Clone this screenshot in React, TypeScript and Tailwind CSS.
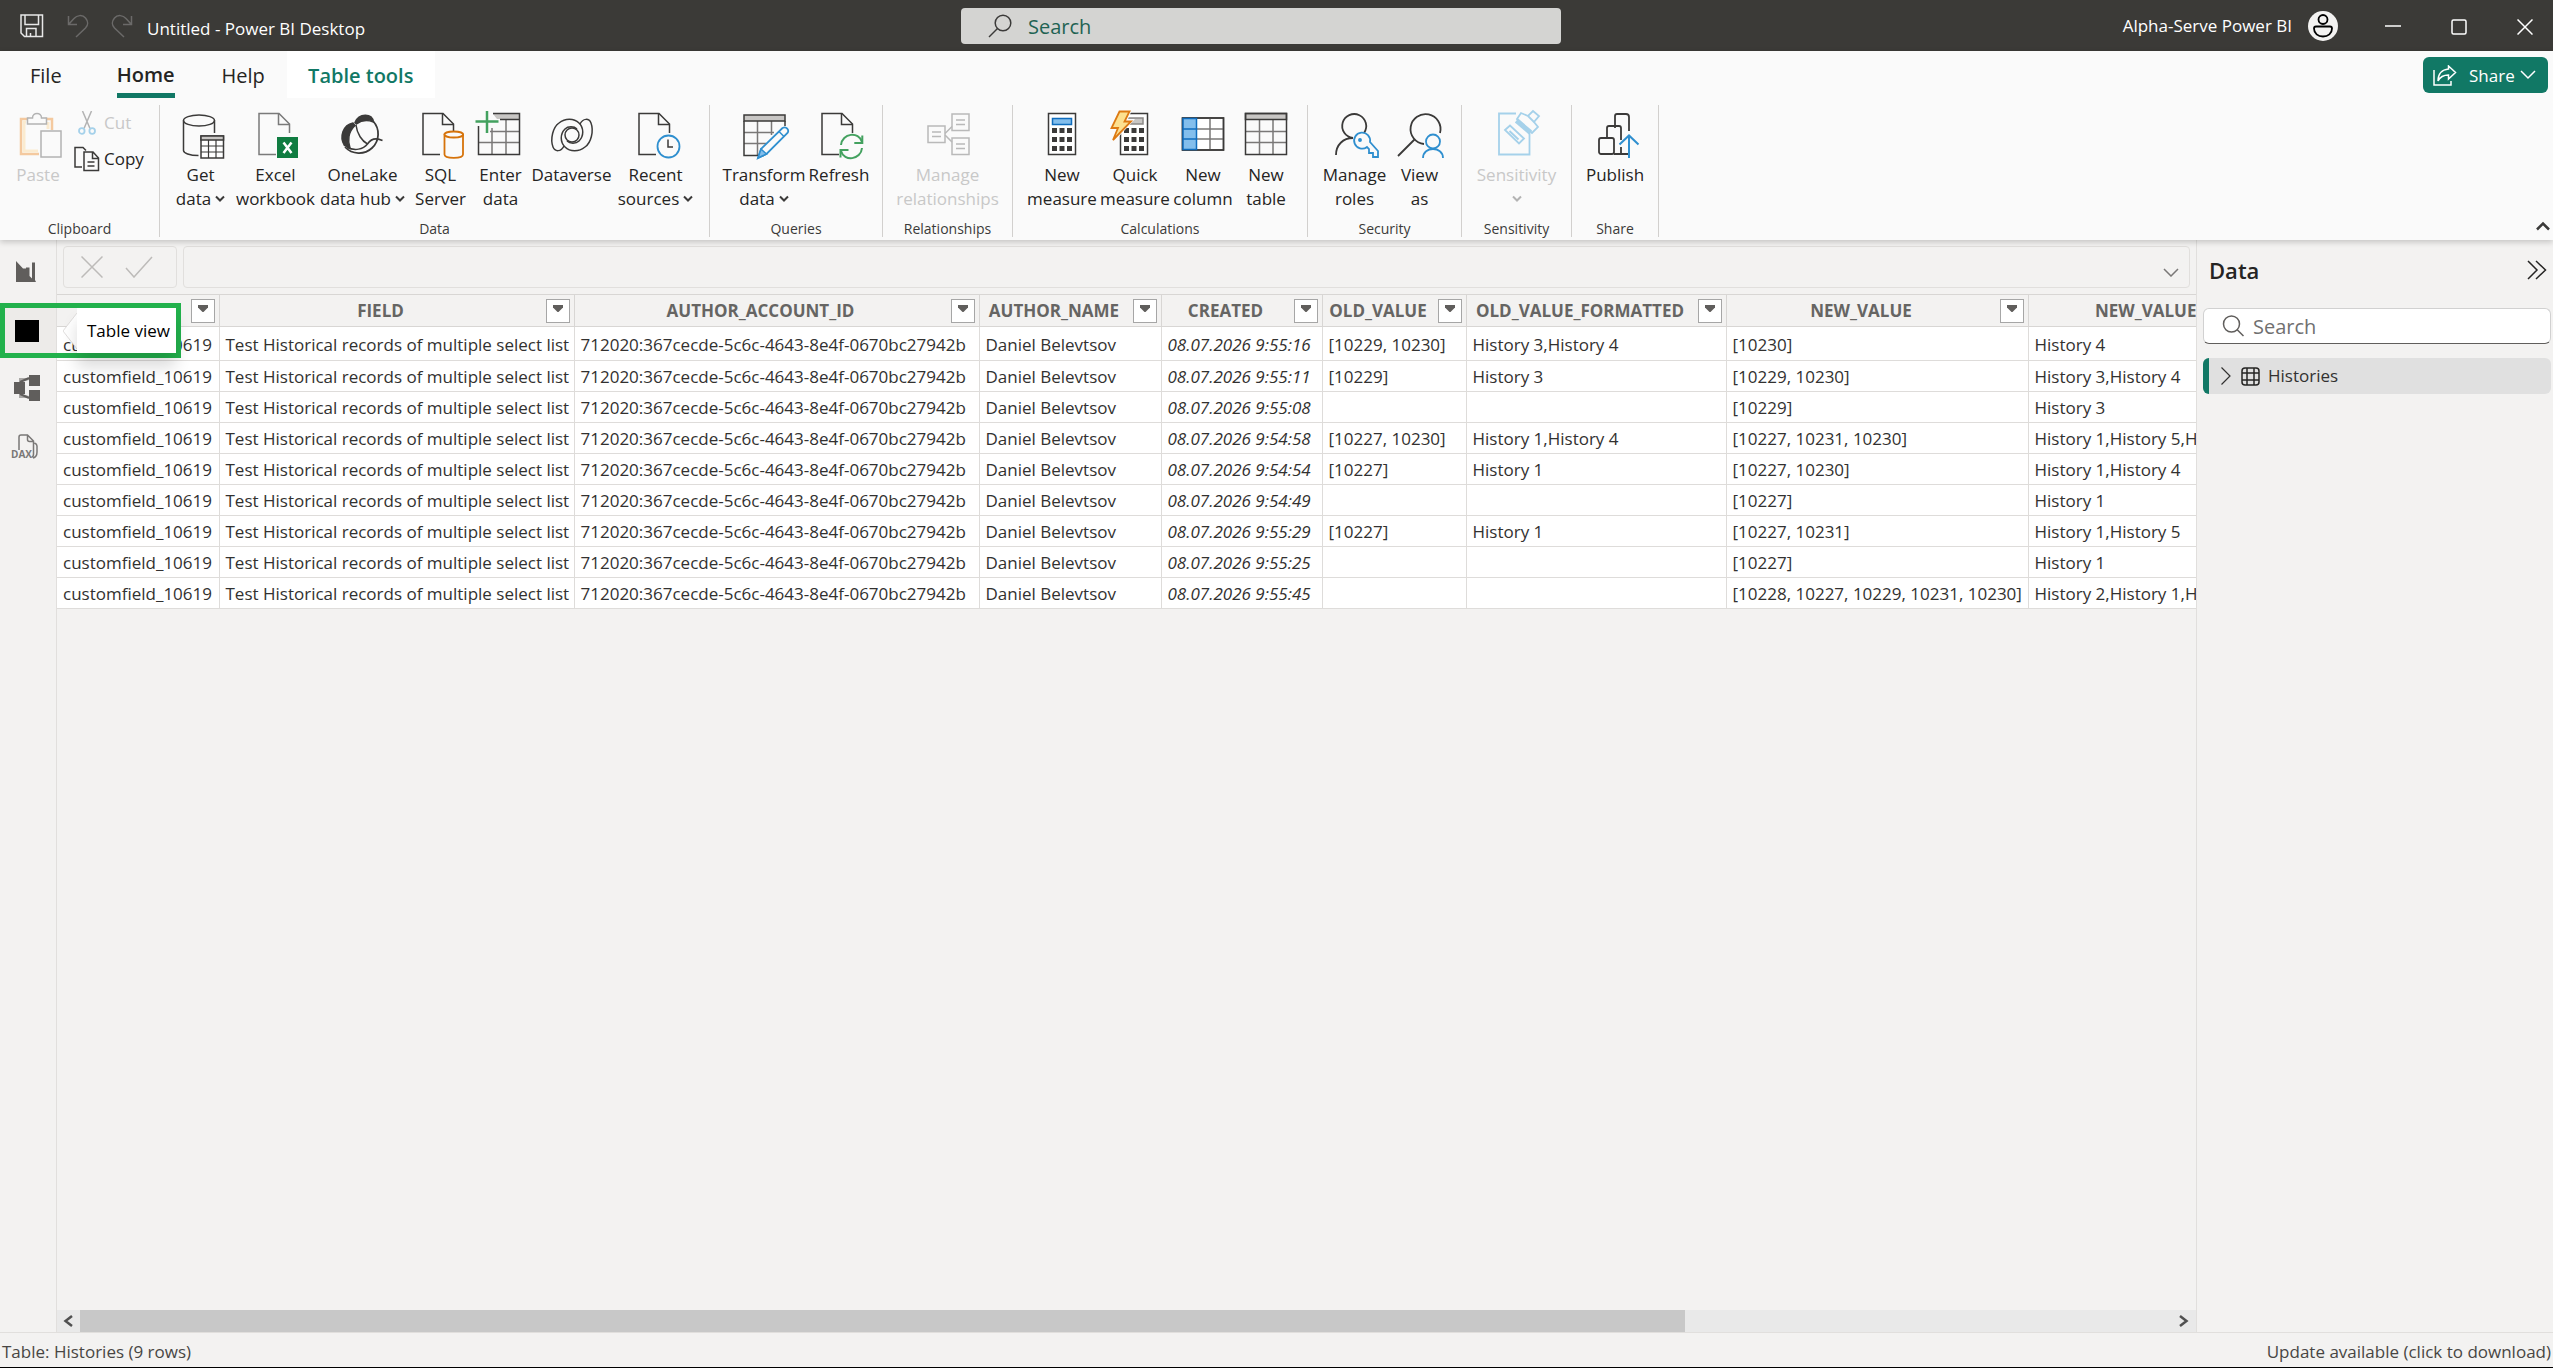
import React from 'react';

type IconProps = { className?: string };

const INK = '#3b3a39';

/* ---------- title bar icons ---------- */
const SaveIcon = () => (
  <svg width="24" height="24" viewBox="0 0 24 24" fill="none" stroke="#e8e8e8" strokeWidth="1.5">
    <path d="M1 1h21.5v21.5H4.500L1 19z" />
    <path d="M5 1v9.500h13.500V1M6.500 22.500v-8h9.500v8M10.500 22v-3" />
  </svg>
);
const UndoIcon = ({ className = '' }: IconProps) => (
  <svg className={className} width="22" height="24" viewBox="0 0 22 24" fill="none" stroke="#6b6a69" strokeWidth="1.500">
    <path d="M1.500 2v8.500H10M2 10L7 4.500C10 1 15.500.5 18.500 4s2.500 7.500 0 10l-9.500 9" />
  </svg>
);
const MagnifierFlipped = ({ className = '' }: IconProps) => (
  <svg className={className} width="24" height="24" viewBox="0 0 24 24" fill="none" stroke={INK} strokeWidth="1.500">
    <circle cx="15" cy="9" r="7.800" />
    <path d="M9.500 14.500L1 23" />
  </svg>
);

/* ---------- ribbon icons (46 x 48 canvas) ---------- */
const Svg = ({ children, dx = 0 }: { children: React.ReactNode; dx?: number }) => (
  <svg width="46" height="48" viewBox="0 0 46 48" fill="none" stroke={INK} strokeWidth="1.500" overflow="visible">
    <g transform={`translate(${dx} 0)`}>{children}</g>
  </svg>
);
const Page = ({ stroke = INK, x = 3 }: { stroke?: string; x?: number }) => (
  <g transform={`translate(${x} 0)`} stroke={stroke}>
    <path d="M18 43.500H1v-41h20l10.500 10.500v9" />
    <path d="M20.500 2.500v11h11" />
  </g>
);
const PasteIcon = () => (
  <Svg dx={2}>
    <path d="M12 8H4v35h18M28 8h7v11" stroke="#f4c99f" strokeWidth="2.500" />
    <path d="M9 11H7v29h14M31 11v7" stroke="#fbebd0" strokeWidth="3" />
    <path d="M10.500 7h5c0-6 9-6 9 0h5v6h-19z" stroke="#b3b3b3" fill="#fafafa" />
    <rect x="24" y="20" width="20" height="26" stroke="#b3b3b3" fill="#fafafa" />
  </Svg>
);
const GetDataIcon = () => (
  <Svg dx={3}>
    <ellipse cx="18" cy="9.500" rx="15.500" ry="5.500" />
    <path d="M2.500 9.500v30c0 2.500 6 5 15 5M33.500 9.500V22" />
    <rect x="20" y="25" width="22.500" height="22" fill="#fff" />
    <rect x="20" y="25" width="22.500" height="4" fill="#c8c6c4" />
    <path d="M20 35h22.500M20 41h22.500M27.500 29v18M35 29v18" strokeWidth="1.200" />
  </Svg>
);
const ExcelIcon = () => (
  <Svg dx={2}>
    <Page stroke="#7a7a7a" x={3} />
    <rect x="22" y="26" width="21" height="21" fill="#107c41" stroke="none" />
    <path d="M28.500 31.500l8 10.500M36.500 31.500l-8 10.500" stroke="#fff" strokeWidth="2.500" />
  </Svg>
);
const OneLakeIcon = () => (
  <Svg dx={-1}>
    <path d="M34 10A18.500 18.500 0 1 1 6 36" strokeWidth="1.800" />
    <path d="M14 12C4 14 0 26 5.500 34.500L11 37C8.500 30 9 21 16 14.500z" fill={INK} />
    <path d="M16 11.500C20 2 33 2 34.500 11C28 8.500 22 9.500 17.500 13z" fill={INK} />
    <path d="M17 14C18 23 23 30 28.500 33M43.500 29.500C36 26 31.500 28.500 28.500 33C24 38.500 16 40 8 36.500" />
  </Svg>
);
const SqlIcon = () => (
  <Svg dx={2}>
    <Page x={2} />
    <path d="M24.500 23.500v20c0 4.500 18.500 4.500 18.500 0v-20z" stroke="#d6730b" fill="#fafafa" strokeWidth="1.800" />
    <ellipse cx="33.800" cy="23.500" rx="9.300" ry="3" stroke="#d6730b" fill="#fafafa" strokeWidth="1.800" />
  </Svg>
);
const EnterDataIcon = () => (
  <Svg dx={-3}>
    <path d="M18 3h26v5H22z" fill="#c8c6c4" stroke="none" />
    <path d="M17 17v26M31 9v34M15 20.500h29M4 31.500h40" stroke="#7a7877" />
    <path d="M18 2.500h26.500v41H3.500V15M25 8.500h19" />
    <path d="M12 0v22M.5 10.500h23" stroke="#43a15f" strokeWidth="2.500" />
  </Svg>
);
const Swirl = () => <path d="M13 27C10 33 4 33 2 28C-1 20 2 8 8 4C14-1 23-1 28 4C33 9 33 17 28 22C25 25 19 25 16 22" />;
const DataverseIcon = () => (
  <Svg>
    <g transform="translate(2 8)">
      <circle cx="21" cy="16" r="7" />
      <Swirl />
      <g transform="rotate(180 21 16)">
        <Swirl />
      </g>
    </g>
  </Svg>
);
const RecentIcon = () => (
  <Svg dx={3}>
    <Page x={2} />
    <circle cx="32.500" cy="35.500" r="11" stroke="#2f8fcf" fill="#fafafa" strokeWidth="1.800" />
    <path d="M32 28.500v7.500h5" />
  </Svg>
);
const TransformIcon = () => (
  <Svg dx={1}>
    <path d="M2 21.500h30M2 32.500h22M15.500 10v34M29.500 10v14" stroke="#7a7877" />
    <rect x="2" y="4" width="41" height="6" fill="#c8c6c4" />
    <path d="M22 44.500H2V10M43 10v5" />
    <path d="M16 47l3-9L40.500 17c4-2 7 2 5 5L24.500 43z" fill="#fafafa" stroke="#2f8fcf" strokeWidth="1.800" />
    <path d="M16 47l3-9 5.500 5z" fill="#83beec" stroke="#2f8fcf" />
    <path d="M37 20.500l5 5" stroke="#2f8fcf" />
  </Svg>
);
const RefreshPageIcon = () => (
  <Svg dx={1}>
    <Page x={4} />
    <circle cx="34.500" cy="35.500" r="13" fill="#fafafa" stroke="none" />
    <path d="M24 34c1-12 18-14 21-3M45 37c-1 12-18 14-21 3" stroke="#43a15f" strokeWidth="2" />
    <path d="M45.300 24.500V32h-8M23.500 46.500V39h8" stroke="#43a15f" strokeWidth="2" />
  </Svg>
);
const RelationsIcon = () => (
  <Svg>
    <g stroke="#b9b9b9">
      <rect x="3" y="15" width="17" height="16.500" />
      <rect x="27" y="3" width="17" height="16.500" />
      <rect x="27" y="27" width="17" height="16.500" />
      <path d="M20 22.500l7-7M20 24l7 7M7 21h9M7 25.500h9M31 9h9M31 13.500h9M31 33h9M31 37.500h9" />
    </g>
  </Svg>
);
const Keys = ({ x }: { x: number }) => (
  <g fill={INK} stroke="none">
    {[17, 26, 35].map((y) =>
      [0, 7.5, 15].map((dx) => <rect key={`${y}-${dx}`} x={x + dx} y={y} width="5" height="5" />)
    )}
  </g>
);
const MeasureIcon = () => (
  <Svg>
    <rect x="9.500" y="2.500" width="27" height="41" fill="#fff" />
    <rect x="13.500" y="7.500" width="19" height="6" fill="#83beec" stroke="#0f6cbd" />
    <Keys x={13} />
  </Svg>
);
const QuickMeasureIcon = () => (
  <Svg dx={-3}>
    <rect x="11.500" y="2.500" width="27" height="41" fill="#fff" />
    <rect x="16" y="7" width="18" height="6" fill="#c8c6c4" stroke="#8a8886" />
    <Keys x={15} />
    <path d="M10-1h13l-4 9h7L3 33l4-11H0z" fill="#fafafa" stroke="none" />
    <path d="M10.500.5H20.500L15.500 10.500H22L4 29l5-12H2.500z" fill="#fde08f" stroke="#dd7a13" strokeWidth="1.800" />
  </Svg>
);
const ColumnIcon = () => (
  <Svg>
    <rect x="2.500" y="7" width="41" height="32" fill="#fff" />
    <path d="M17 18h26M17 28h26M30 7v32" stroke="#7a7877" />
    <path d="M2.500 7h41v32h-41z" />
    <rect x="3" y="7.500" width="13.500" height="31" fill="#83beec" stroke="#0f6cbd" />
    <path d="M3 18h13M3 28h13" stroke="#0f6cbd" />
  </Svg>
);
const TableIcon = () => (
  <Svg>
    <path d="M16.500 9v34M30 9v34M3 20.500h40M3 31.500h40" stroke="#7a7877" />
    <rect x="2.500" y="2.500" width="41" height="6" fill="#c8c6c4" />
    <rect x="2.500" y="2.500" width="41" height="41" />
  </Svg>
);
const RolesIcon = () => (
  <Svg dx={1}>
    <path d="M31 22A12 12 0 1 0 20 27C10 27 3 34 3 44" strokeWidth="1.800" />
    <path d="M34 36a8 8 0 1 1 3-5l8 9v6h-5v-4h-4v-4z" fill="#fafafa" stroke="#2f8fcf" strokeWidth="1.800" />
    <circle cx="27" cy="29" r="1.200" fill="#2f8fcf" stroke="#2f8fcf" />
  </Svg>
);
const ViewAsIcon = () => (
  <Svg>
    <path d="M43 22A15 15 0 1 0 27 33M18 28L1 45" strokeWidth="1.800" />
    <circle cx="36" cy="30.500" r="7" fill="#fafafa" stroke="#2f8fcf" strokeWidth="1.800" />
    <path d="M26 47c0-12 20-12 20 0" stroke="#2f8fcf" strokeWidth="1.800" />
  </Svg>
);
const SensitivityIcon = () => (
  <Svg dx={2}>
    <g stroke="#a5d1ea" strokeWidth="1.800">
      <path d="M20 2.500H3v41h30.500V22" />
      <path d="M9 19l5-4.500 14 13-5 5zM13.500 20l9 8.500" />
      <path d="M21 8l4-6 7 3 5-5 6 5-5 6 4 5-6 6z" fill="#fafafa" />
      <path d="M20.500 9.500l14 12" strokeWidth="5" />
      <path d="M32 5l6 6" />
    </g>
  </Svg>
);
const PublishIcon = () => (
  <Svg dx={5}>
    <g strokeWidth="1.800">
      <rect x="2" y="27" width="15" height="16" rx="2" />
      <path d="M10 26V17q0-2 2-2h10q2 0 2 2v12M17 43h14M24 36v7M18 17V5q0-2 2-2h9q3 0 3 3v14" />
    </g>
    <path d="M32 47V25M22.500 33.500L32 24.500l9.500 9" stroke="#2f8fcf" strokeWidth="2" />
  </Svg>
);
const CutIcon = () => (
  <svg width="18" height="24" viewBox="0 0 18 24" fill="none" strokeWidth="1.500">
    <path d="M4.500 0L12 17.500M13.500 0L6 17.500" stroke="#b3b3b3" />
    <circle cx="3.800" cy="20" r="2.800" stroke="#a5d1ea" strokeWidth="1.800" />
    <circle cx="14.200" cy="20" r="2.800" stroke="#a5d1ea" strokeWidth="1.800" />
  </svg>
);
const CopyIcon = () => (
  <svg width="26" height="26" viewBox="0 0 26 26" fill="none" stroke={INK} strokeWidth="1.500">
    <path d="M8 21H1V1.500h8l3 3" />
    <path d="M10 6h9l5.500 6v12.500H10zM18.500 6v6.500H24M13.500 16h7M13.500 20h7" />
  </svg>
);
const MiniChevron = ({ stroke = INK }: { stroke?: string }) => (
  <svg width="10" height="8" viewBox="0 0 10 8" fill="none" stroke={stroke} strokeWidth="2" className="inline-block">
    <path d="M1 1.500l4 4 4-4" />
  </svg>
);

/* ---------- ribbon ---------- */
type Tool = {
  icon: React.ReactNode;
  lines: string[];
  width: string;
  menu?: boolean;
  disabled?: boolean;
};

const RibbonButton = ({ icon, lines, width, menu, disabled }: Tool) => (
  <button
    type="button"
    disabled={disabled}
    className={`flex h-full flex-col items-center text-[17px] leading-6 whitespace-nowrap ${width} ${
      disabled ? 'text-[#c8c8c8]' : 'text-[#252423]'
    }`}
  >
    <span className="mb-1 block h-12">{icon}</span>
    {lines.map((line, i) => (
      <span key={i} className="flex h-6 items-center gap-1">
        {line}
        {menu && i === lines.length - 1 ? <MiniChevron stroke={disabled ? '#b3b3b3' : INK} /> : null}
      </span>
    ))}
  </button>
);

const Group = ({
  label,
  children,
  className,
  toolsClass = 'justify-center',
}: {
  label: string;
  children: React.ReactNode;
  className: string;
  toolsClass?: string;
}) => (
  <section aria-label={label} className={`flex h-33 flex-col border-r border-[#d2d0ce] pt-1.5 ${className}`}>
    <div className={`flex h-[111px] ${toolsClass}`}>{children}</div>
    <div className="text-center text-sm leading-4 text-[#3b3a39]">{label}</div>
  </section>
);

const dataTools: Tool[] = [
  { icon: <GetDataIcon />, lines: ['Get', 'data'], width: 'w-[66px]', menu: true },
  { icon: <ExcelIcon />, lines: ['Excel', 'workbook'], width: 'w-[84px]' },
  { icon: <OneLakeIcon />, lines: ['OneLake', 'data hub'], width: 'w-[90px]', menu: true },
  { icon: <SqlIcon />, lines: ['SQL', 'Server'], width: 'w-[66px]' },
  { icon: <EnterDataIcon />, lines: ['Enter', 'data'], width: 'w-[54px]' },
  { icon: <DataverseIcon />, lines: ['Dataverse'], width: 'w-[88px]' },
  { icon: <RecentIcon />, lines: ['Recent', 'sources'], width: 'w-[80px]', menu: true },
];
const queryTools: Tool[] = [
  { icon: <TransformIcon />, lines: ['Transform', 'data'], width: 'w-[80px]', menu: true },
  { icon: <RefreshPageIcon />, lines: ['Refresh'], width: 'w-[70px]' },
];
const calcTools: Tool[] = [
  { icon: <MeasureIcon />, lines: ['New', 'measure'], width: 'w-[76px]' },
  { icon: <QuickMeasureIcon />, lines: ['Quick', 'measure'], width: 'w-[70px]' },
  { icon: <ColumnIcon />, lines: ['New', 'column'], width: 'w-[66px]' },
  { icon: <TableIcon />, lines: ['New', 'table'], width: 'w-[60px]' },
];
const securityTools: Tool[] = [
  { icon: <RolesIcon />, lines: ['Manage', 'roles'], width: 'w-[70px]' },
  { icon: <ViewAsIcon />, lines: ['View', 'as'], width: 'w-[60px]' },
];

const renderTools = (tools: Tool[]) => tools.map((t) => <RibbonButton key={t.lines.join(' ')} {...t} />);

const Ribbon = () => (
  <div className="flex items-start pt-[7px]">
    <Group label="Clipboard" className="w-[160px]" toolsClass="pl-3">
      <RibbonButton icon={<PasteIcon />} lines={['Paste']} width="w-[52px]" disabled />
      <div className="flex flex-1 flex-col gap-2.5 pl-2.5 text-[17px]">
        <button type="button" disabled className="flex h-6 items-center gap-2 pl-1 text-[#c8c8c8]">
          <CutIcon />
          Cut
        </button>
        <button type="button" className="flex h-7 items-center gap-1 text-[#252423]">
          <CopyIcon />
          Copy
        </button>
      </div>
    </Group>
    <Group label="Data" className="w-[550px]" toolsClass="justify-center pr-1.5">{renderTools(dataTools)}</Group>
    <Group label="Queries" className="w-[173px]" toolsClass="justify-center pl-1.5">{renderTools(queryTools)}</Group>
    <Group label="Relationships" className="w-[130px]">
      <RibbonButton icon={<RelationsIcon />} lines={['Manage', 'relationships']} width="w-[110px]" disabled />
    </Group>
    <Group label="Calculations" className="w-[295px]">{renderTools(calcTools)}</Group>
    <Group label="Security" className="w-[154px]">{renderTools(securityTools)}</Group>
    <Group label="Sensitivity" className="w-[110px]">
      <RibbonButton icon={<SensitivityIcon />} lines={['Sensitivity', '']} width="w-[90px]" menu disabled />
    </Group>
    <Group label="Share" className="w-[87px]">
      <RibbonButton icon={<PublishIcon />} lines={['Publish']} width="w-[70px]" />
    </Group>
    <button type="button" aria-label="Collapse ribbon" className="mr-[3px] ml-auto self-end pb-1.5">
      <svg width="14" height="10" viewBox="0 0 14 10" fill="none" stroke={INK} strokeWidth="2.500">
        <path d="M1 8.500l6-6 6 6" />
      </svg>
    </button>
  </div>
);

/* ---------- data grid ---------- */
const columns = [
  { name: '', width: 'w-[162px]' },
  { name: 'FIELD', width: 'w-[355px]' },
  { name: 'AUTHOR_ACCOUNT_ID', width: 'w-[405px]' },
  { name: 'AUTHOR_NAME', width: 'w-[182px]' },
  { name: 'CREATED', width: 'w-[161px]' },
  { name: 'OLD_VALUE', width: 'w-[144px]' },
  { name: 'OLD_VALUE_FORMATTED', width: 'w-[260px]' },
  { name: 'NEW_VALUE', width: 'w-[302px]' },
  { name: 'NEW_VALUE_FORMATTED', width: 'w-[378px]' },
];

const records = [
  ['9:55:16', '[10229, 10230]', 'History 3,History 4', '[10230]', 'History 4'],
  ['9:55:11', '[10229]', 'History 3', '[10229, 10230]', 'History 3,History 4'],
  ['9:55:08', '', '', '[10229]', 'History 3'],
  ['9:54:58', '[10227, 10230]', 'History 1,History 4', '[10227, 10231, 10230]', 'History 1,History 5,History 4'],
  ['9:54:54', '[10227]', 'History 1', '[10227, 10230]', 'History 1,History 4'],
  ['9:54:49', '', '', '[10227]', 'History 1'],
  ['9:55:29', '[10227]', 'History 1', '[10227, 10231]', 'History 1,History 5'],
  ['9:55:25', '', '', '[10227]', 'History 1'],
  ['9:55:45', '', '', '[10228, 10227, 10229, 10231, 10230]', 'History 2,History 1,History 3,History 5,History 4'],
];

const Grid = () => (
  <div className="flex-1 overflow-hidden">
    <table className="w-[2349px] table-fixed border-collapse text-[17px] leading-6 text-[#323130]">
      <thead>
        <tr className="h-8">
          {columns.map((c, i) => (
            <th
              key={i}
              className={`border border-l-0 border-[#d8d6d4] bg-[#f3f2f1] p-0 font-bold text-[#666563] ${c.width}`}
            >
              <div className="flex items-center gap-1 pr-1">
                <span className="flex-1 text-center">{c.name}</span>
                <button
                  type="button"
                  aria-label={`Filter ${c.name}`}
                  className="flex h-6 w-6 items-center justify-center border border-[#a6a6a6] bg-white pb-1"
                >
                  <svg width="10" height="7" viewBox="0 0 10 7" fill="#605e5c">
                    <path d="M0 0h10v2.500L5.500 7h-1L0 2.500z" />
                  </svg>
                </button>
              </div>
            </th>
          ))}
        </tr>
      </thead>
      <tbody>
        {records.map(([time, ...rest], r) => (
          <tr key={r} className="h-[31px] first:h-[34px]">
            {[
              'customfield_10619',
              'Test Historical records of multiple select list',
              '712020:367cecde-5c6c-4643-8e4f-0670bc27942b',
              'Daniel Belevtsov',
              `08.07.2026 ${time}`,
              ...rest,
            ].map((value, c) => (
              <td
                key={c}
                className={`overflow-hidden border border-l-0 border-[#dedcda] bg-white px-1.5 pt-0.5 pb-0 whitespace-nowrap ${
                  c === 4 ? 'italic' : ''
                }`}
              >
                {value}
              </td>
            ))}
          </tr>
        ))}
      </tbody>
    </table>
  </div>
);

/* ---------- left rail ---------- */
const Rail = () => (
  <nav aria-label="Views" className="flex w-[57px] shrink-0 flex-col border-r border-[#e1dfdd]">
    <button type="button" aria-label="Report view" className="flex h-[63px] items-center pl-4">
      <svg width="20" height="21" viewBox="0 0 20 21" fill="#605e5c">
        <path d="M0 0l7 7.500h3V6.500h3.500V15l2.500 2.500V1.500h3V19l1 2H0z" />
      </svg>
    </button>
    <div className="relative h-[55px]">
      <button type="button" aria-label="Table view" className="flex h-full w-full items-center bg-[#edebe9] pl-[15px]">
        <span className="h-[22px] w-6 bg-black" />
      </button>
      <div className="absolute top-0 left-0 z-10 flex h-full w-[181px] items-stretch border-[5px] border-[#22b14c]">
        <div role="tooltip" className="ml-[58px] flex flex-1 items-center">
          <svg width="14" height="36" viewBox="0 0 14 36" fill="#fff" stroke="#d8d6d4" strokeWidth="0.800" className="shrink-0">
            <path d="M14 0L0 18l14 18" />
          </svg>
          <span className="flex h-full flex-1 items-center bg-white pl-2.5 text-[17px] leading-6 whitespace-nowrap text-black shadow-[0_14px_16px_rgba(0,0,0,0.14)]">
            Table view
          </span>
        </div>
      </div>
    </div>
    <button type="button" aria-label="Model view" className="mt-4 flex h-7 items-center pl-3.5">
      <svg width="26" height="26" viewBox="0 0 26 26" fill="#605e5c">
        <path d="M0 7h11v12H0zM15 0h11v11H15zM15 15h11v11H15z" />
        <path d="M6 7l9-4M6 19l9 4" fill="none" stroke="#605e5c" strokeWidth="2" />
        <path d="M5 3h10v2L8 7H5zM5 23h10v-2l-7-2H5z" opacity="0.5" />
      </svg>
    </button>
    <button type="button" aria-label="DAX query view" className="relative mt-8 flex h-8 items-start pl-[17px]">
      <svg width="22" height="26" viewBox="0 0 22 26" fill="none" stroke="#7a7877" strokeWidth="1.500">
        <path d="M2 16V3q0-2 2-2h6.500l6 6v13q0 3-2 3M10.500 1v4.500q0 2 2 2H16M17.500 9q2.500 1 2.500 3v6q0 5-4 6" />
      </svg>
      <span className="absolute top-3 left-[11px] text-[10px] leading-4 font-bold text-[#7a7877]">DAX</span>
    </button>
  </nav>
);

/* ---------- data pane ---------- */
const DataPane = () => (
  <aside className="w-[357px] shrink-0 border-l border-[#e1dfdd] pr-0.5 pl-1.5">
    <div className="flex h-[68px] items-center justify-between pr-1 pb-2 pl-1.5">
      <h2 className="text-[22px] leading-7 font-semibold text-[#252423]">Data</h2>
      <button type="button" aria-label="Collapse pane" className="-ml-1">
        <svg width="20" height="20" viewBox="0 0 20 20" fill="none" stroke="#252423" strokeWidth="1.500">
          <path d="M1 1l9 9-9 9M9 1l9.500 9L9 19" />
        </svg>
      </button>
    </div>
    <label className="flex h-9 items-center gap-2 rounded-md border border-b-[#605e5c] border-[#d1d1d1] bg-white pl-[18px]">
      <svg width="23" height="22" viewBox="0 0 23 22" fill="none" stroke="#605e5c" strokeWidth="1.500">
        <circle cx="9.500" cy="9" r="8" />
        <path d="M15 14.500l6.500 6.500" />
      </svg>
      <input
        type="search"
        aria-label="Search fields"
        placeholder="Search"
        className="min-w-0 flex-1 bg-transparent pt-0.5 text-xl leading-6 outline-none placeholder:text-[#707070]"
      />
    </label>
    <button
      type="button"
      className="mt-3.5 flex h-9 w-full items-center overflow-hidden rounded-md bg-[#e0e0e0] text-[17px] text-[#323130]"
    >
      <span className="mr-3 h-full w-1.5 bg-[#117865]" />
      <svg width="10" height="18" viewBox="0 0 10 18" fill="none" stroke="#323130" strokeWidth="1.200">
        <path d="M.5.5L9 9l-8.500 8.500" />
      </svg>
      <svg width="19" height="19" viewBox="0 0 19 19" fill="none" stroke="#252423" strokeWidth="1.500" className="mr-2 ml-2.5">
        <rect x="1" y="1" width="17" height="17" rx="3" />
        <path d="M6 1v17M13 1v17M1 6h17M1 13h17" />
      </svg>
      Histories
    </button>
  </aside>
);

export default function App() {
  return (
    <div className="flex h-screen flex-col overflow-hidden border-b border-black bg-[#f3f2f1] font-['Open_Sans','Noto_Sans',sans-serif] text-[#252423]">
      <header className="grid h-[51px] shrink-0 grid-cols-[961fr_600px_972fr] items-center bg-[#3b3a37] pr-5 text-[17px] text-white">
        <div className="flex items-center pl-5">
          <button type="button" aria-label="Save"><SaveIcon /></button>
          <button type="button" aria-label="Undo" className="ml-[23px]"><UndoIcon /></button>
          <button type="button" aria-label="Redo" className="ml-[22px]"><UndoIcon className="-scale-x-100" /></button>
          <h1 className="ml-3.5 pt-1.5">Untitled - Power BI Desktop</h1>
        </div>
        <label className="flex h-9 items-center gap-4 rounded-sm bg-[#d4d4d2] pl-[27px]">
          <MagnifierFlipped />
          <input
            type="search"
            aria-label="Search"
            placeholder="Search"
            className="min-w-0 flex-1 bg-transparent pt-0.5 text-xl leading-6 outline-none placeholder:text-[#1f6353]"
          />
        </label>
        <div className="flex items-center justify-end">
          <span>Alpha-Serve Power BI</span>
          <button type="button" aria-label="Account" className="ml-4">
            <svg width="30" height="30" viewBox="0 0 30 30" fill="none" stroke="#000" strokeWidth="1.800">
              <circle cx="15" cy="15" r="15" fill="#f3f2f1" stroke="none" />
              <circle cx="15" cy="8.500" r="4.500" />
              <path d="M8 15.500h14q2 0 2 2c0 5-4 8-9 8s-9-3-9-8q0-2 2-2z" />
            </svg>
          </button>
          <button type="button" aria-label="Minimize" className="ml-[47px]">
            <svg width="16" height="16" viewBox="0 0 16 16" stroke="#fff" strokeWidth="1.500"><path d="M0 8h16" /></svg>
          </button>
          <button type="button" aria-label="Maximize" className="ml-[50px] pt-0.5">
            <svg width="16" height="16" viewBox="0 0 16 16" fill="none" stroke="#fff" strokeWidth="1.500">
              <rect x="1" y="1" width="14" height="14" rx="1.500" />
            </svg>
          </button>
          <button type="button" aria-label="Close" className="ml-[50px] pt-0.5">
            <svg width="16" height="16" viewBox="0 0 16 16" stroke="#fff" strokeWidth="1.500">
              <path d="M.5.5l15 15M15.500.5l-15 15" />
            </svg>
          </button>
        </div>
      </header>

      <div className="relative z-20 h-[189px] shrink-0 bg-[#fafafa] shadow-[0_2px_6px_rgba(0,0,0,0.2)]">
        <div className="flex h-[47px] items-stretch text-xl">
          <div role="tablist" className="flex">
            <button type="button" role="tab" aria-selected="false" className="ml-[30px] pt-0.5">File</button>
            <button
              type="button"
              role="tab"
              aria-selected="true"
              className="ml-[55px] border-b-5 border-[#117865] pt-1.5 font-semibold"
            >
              Home
            </button>
            <button type="button" role="tab" aria-selected="false" className="ml-[47px] pt-0.5">Help</button>
            <button
              type="button"
              role="tab"
              aria-selected="false"
              className="ml-[22px] w-[148px] bg-white pt-0.5 font-semibold text-[#117865]"
            >
              Table tools
            </button>
          </div>
          <button
            type="button"
            className="mt-1.5 mr-[5px] ml-auto flex h-9 w-[125px] items-center rounded-md bg-[#117865] pl-2.5 text-[17px] text-white"
          >
            <svg width="24" height="21" viewBox="0 0 24 21" fill="none" stroke="#fff" strokeWidth="1.500">
              <path d="M1 5v15h17v-4" />
              <path d="M15.500 1l7 6.500-7 6.500v-4C10 10 7 12 5 16c0-7 4-11.500 10.500-12z" />
            </svg>
            <span className="ml-3 flex-1 pt-0.5 text-left">Share</span>
            <svg width="16" height="10" viewBox="0 0 16 10" fill="none" stroke="#fff" strokeWidth="1.500" className="mr-3">
              <path d="M1 1l7 7 7-7" />
            </svg>
          </button>
        </div>
        <Ribbon />
      </div>

      <div className="flex min-h-0 flex-1">
        <Rail />
        <main className="flex min-w-0 flex-1 flex-col">
          <div className="flex h-[54px] shrink-0 gap-1.5 p-1.5">
            <div className="flex h-[42px] w-[114px] items-center gap-[22px] rounded-sm border border-[#e1dfdd] pl-[17px]">
              <button type="button" aria-label="Cancel">
                <svg width="22" height="22" viewBox="0 0 22 22" stroke="#bdbbb9" strokeWidth="1.500">
                  <path d="M.5.5l21 21M21.500.5l-21 21" />
                </svg>
              </button>
              <button type="button" aria-label="Commit">
                <svg width="28" height="22" viewBox="0 0 28 22" fill="none" stroke="#bdbbb9" strokeWidth="1.500">
                  <path d="M1 12l8 9L27 1" />
                </svg>
              </button>
            </div>
            <div className="flex h-[42px] flex-1 rounded-sm border border-[#e1dfdd]">
              <input type="text" aria-label="Formula" className="min-w-0 flex-1 bg-transparent px-3 text-[17px] outline-none" />
              <button type="button" aria-label="Expand formula bar" className="mr-2.5 pt-2.5">
                <svg width="16" height="9" viewBox="0 0 16 9" fill="none" stroke="#7a7877" strokeWidth="1.500">
                  <path d="M1 1l7 7 7-7" />
                </svg>
              </button>
            </div>
          </div>
          <Grid />
          <div className="flex h-[22px] shrink-0 items-stretch bg-[#e9e9e9]">
            <button type="button" aria-label="Scroll left" className="w-[23px] pl-1.5">
              <svg width="10" height="12" viewBox="0 0 10 12" fill="none" stroke="#505050" strokeWidth="2.500">
                <path d="M9 1L2.500 6 9 11" />
              </svg>
            </button>
            <div className="flex-1">
              <div className="h-full w-23/30 bg-[#c8c8c8]" />
            </div>
            <button type="button" aria-label="Scroll right" className="w-[23px] pl-1.5">
              <svg width="10" height="12" viewBox="0 0 10 12" fill="none" stroke="#505050" strokeWidth="2.500">
                <path d="M1 1l6.500 5L1 11" />
              </svg>
            </button>
          </div>
        </main>
        <DataPane />
      </div>

      <footer className="flex h-[35px] shrink-0 items-center justify-between border-t border-[#e1dfdd] px-0.5 pt-1 text-[17px] text-[#484644]">
        <span>Table: Histories (9 rows)</span>
        <button type="button">Update available (click to download)</button>
      </footer>
    </div>
  );
}
